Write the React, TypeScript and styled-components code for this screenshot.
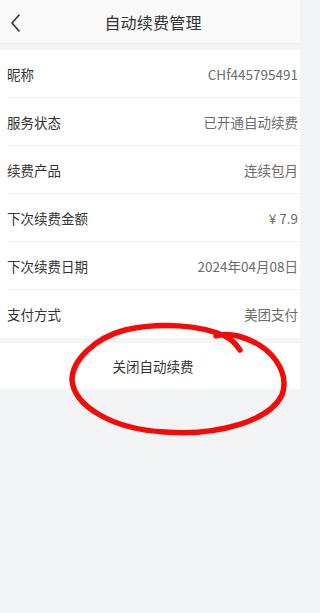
import React from "react";
import styled, { createGlobalStyle } from "styled-components";

const GlobalStyle = createGlobalStyle`
  html, body {
    margin: 0;
    padding: 0;
    background: #f3f4f6;
    font-family: "Noto Sans CJK SC", "Noto Sans", sans-serif;
  }
`;

const rows = [
  { label: "昵称", value: "CHf445795491" },
  { label: "服务状态", value: "已开通自动续费" },
  { label: "续费产品", value: "连续包月" },
  { label: "下次续费金额", value: "¥ 7.9" },
  { label: "下次续费日期", value: "2024年04月08日" },
  { label: "支付方式", value: "美团支付" },
];

const Page = styled.div`
  position: relative;
  width: 300px;
  min-height: 613px;
  background: #f3f4f6;
  overflow: hidden;
`;

const Header = styled.div`
  position: relative;
  height: 43px;
  display: flex;
  align-items: center;
  justify-content: center;
  padding-left: 6px;
  background: #f9f9f9;
  border-bottom: 1px solid #ececec;
`;

const BackButton = styled.div`
  position: absolute;
  left: 9px;
  top: 12px;
  width: 14px;
  height: 22px;
  display: flex;
`;

const Title = styled.div`
  font-size: 16px;
  color: #333;
  letter-spacing: 0.2px;
`;

const List = styled.div`
  margin-top: 6px;
  background: #fff;
`;

const Row = styled.div<{ $last?: boolean }>`
  height: 48px;
  margin-left: 7px;
  padding-right: 2px;
  display: flex;
  align-items: center;
  justify-content: space-between;
  border-bottom: ${(p) => (p.$last ? "none" : "1px solid #f1f1f1")};
  box-sizing: border-box;
`;

const Label = styled.span`
  font-size: 13.5px;
  color: #333;
`;

const Value = styled.span`
  font-size: 13.5px;
  color: #6b6b6b;
`;

const CancelButton = styled.div`
  margin-top: 5px;
  height: 46px;
  background: #fff;
  display: flex;
  align-items: center;
  justify-content: center;
  padding-left: 6px;
  font-size: 13.5px;
  color: #333;
`;

const Annotation = styled.svg`
  position: absolute;
  left: 0;
  top: 0;
  pointer-events: none;
`;

export default function App() {
  return (
    <Page>
      <GlobalStyle />
      <Header>
        <BackButton>
          <svg width="14" height="22" viewBox="0 0 14 22">
            <path d="M10 3 L3 11 L10 19" fill="none" stroke="#333" strokeWidth="1.6" strokeLinecap="round" strokeLinejoin="round" />
          </svg>
        </BackButton>
        <Title>自动续费管理</Title>
      </Header>
      <List>
        {rows.map((r, i) => (
          <Row key={r.label} $last={i === rows.length - 1}>
            <Label>{r.label}</Label>
            <Value>{r.value}</Value>
          </Row>
        ))}
      </List>
      <CancelButton>关闭自动续费</CancelButton>
      <Annotation width="300" height="613" viewBox="0 0 300 613">
        <path
          d="M240 350 C236 344, 231 339, 225 336 C200 325, 160 322, 125 330 C95 338, 72 360, 72 380 C74 405, 110 429, 165 432 C220 436, 270 420, 282 395 C290 372, 272 345, 238 336 C230 334, 222 334, 216 336"
          fill="none"
          stroke="#f50a0a"
          strokeWidth="5.5"
          strokeLinecap="round"
          strokeLinejoin="round"
        />
      </Annotation>
    </Page>
  );
}
